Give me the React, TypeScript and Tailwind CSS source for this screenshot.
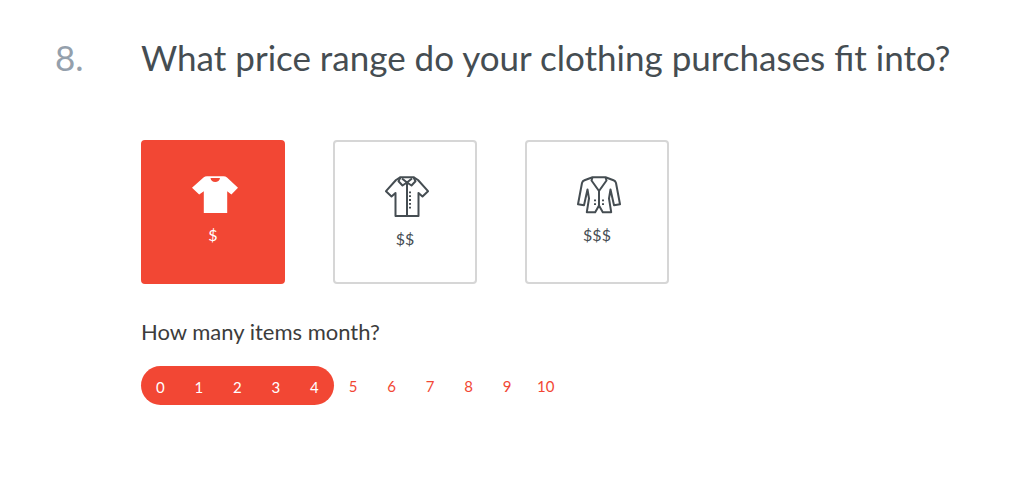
import { useState, type ReactNode } from "react";
import clsx from "clsx";

const MAX_ITEMS = 10;

function TeeIcon() {
  return (
    <svg width="46" height="38" viewBox="0 0 46 38" fill="currentColor" aria-hidden="true">
      <path d="M11.5 1.6Q13 .3 15 .3H31.5Q33.5 .3 35 1.6L46 11.8 39.4 18.6 35.2 15.2V37H11.8V15.2L7.2 18.6 0 11.8ZM18.5 2C18.8 4.8 20.8 6 23.2 6S27.7 4.8 28 2Z" />
    </svg>
  );
}

function ShirtIcon() {
  return (
    <svg
      width="44"
      height="42"
      viewBox="0 0 44 42"
      fill="none"
      stroke="currentColor"
      strokeWidth="2"
      strokeLinejoin="round"
      aria-hidden="true"
    >
      <path d="M15.5 1.2H28.5L33 4 43 15.2 37.5 20.5 33.5 17V40H10.5V17L6.5 20.5 1 15.2 11 4Z" />
      <path d="M15.5 1.2 13.5 5.2 17.5 9.5 22 6.5 26.5 9.5 30.5 5.2 28.5 1.2M17 2.5 22 6.5 27 2.5M22 6.5V40" />
      <path d="M25 15.5V33" strokeDasharray="1.8 2" />
    </svg>
  );
}

function BlazerIcon() {
  return (
    <svg
      width="44"
      height="38"
      viewBox="0 0 44 38"
      fill="none"
      stroke="currentColor"
      strokeWidth="2"
      strokeLinejoin="round"
      aria-hidden="true"
    >
      <path d="M15.5 1.2H28.5L36.5 4.2Q38.5 5 39 7L43 28.3 37 29.3 33.5 13.5 32 22.5 34.2 36.2H25.8L22 29.5 18.2 36.2H9.8L12 22.5 10.5 13.5 7 29.3 1 28.3 5 7Q5.5 5 7.5 4.2Z" />
      <path d="M15.5 1.2 14.5 4.5 22 15 29.5 4.5 28.5 1.2M22 15V29.5" />
      <path d="M18 23.5V29M26 23.5V29" strokeDasharray="1.8 2" />
    </svg>
  );
}

const PRICE_RANGES: { value: string; icon: ReactNode }[] = [
  { value: "$", icon: <TeeIcon /> },
  { value: "$$", icon: <ShirtIcon /> },
  { value: "$$$", icon: <BlazerIcon /> },
];

interface PriceCardProps {
  value: string;
  icon: ReactNode;
  checked: boolean;
  onSelect: (value: string) => void;
}

function PriceCard({ value, icon, checked, onSelect }: PriceCardProps) {
  return (
    <label
      className={clsx(
        "relative flex size-36 cursor-pointer flex-col items-center rounded-sm border-2 pt-[34px]",
        checked ? "border-[#f24734] bg-[#f24734] text-white" : "border-[#d6d6d6] text-[#454d52]",
      )}
    >
      <input
        type="radio"
        name="price-range"
        value={value}
        checked={checked}
        onChange={() => onSelect(value)}
        className="absolute inset-0 size-full cursor-pointer opacity-0"
      />
      <span className="pl-1">{icon}</span>
      <span className="mt-3 text-base leading-[18px]">{value}</span>
    </label>
  );
}

export default function App() {
  const [priceRange, setPriceRange] = useState("$");
  const [items, setItems] = useState(4);

  const counts = Array.from({ length: MAX_ITEMS + 1 }, (_, i) => i);
  const renderCount = (n: number) => (
    <button key={n} type="button" aria-pressed={n === items} onClick={() => setItems(n)}>
      {n}
    </button>
  );

  return (
    <main className="flex min-h-screen bg-white pt-8 pr-8 pl-[55px] font-['Lato',sans-serif]">
      <span className="w-[86px] shrink-0 text-[35px] leading-[50px] text-[#94a0ac]">8.</span>

      <div className="min-w-0 flex-1">
        <h1 id="price-label" className="text-[35px] leading-[50px] text-[#454d52]">
          What price range do your clothing purchases fit into?
        </h1>

        {/* Price range cards */}
        <div role="radiogroup" aria-labelledby="price-label" className="mt-[58px] flex flex-wrap gap-12">
          {PRICE_RANGES.map((range) => (
            <PriceCard
              key={range.value}
              {...range}
              checked={priceRange === range.value}
              onSelect={setPriceRange}
            />
          ))}
        </div>

        {/* Item count scale, filled up to the chosen number */}
        <h2 id="items-label" className="mt-8 text-[22px] leading-8 text-[#3c3c3c]">
          How many items month?
        </h2>
        <div
          role="group"
          aria-labelledby="items-label"
          className="mt-[18px] grid max-w-[424px] grid-cols-11 text-[15px] leading-5 text-[#f24734]"
        >
          <div
            className="grid h-[39px] grid-cols-subgrid rounded-full bg-[#f24734] pt-0.5 text-white"
            style={{ gridColumn: `span ${items + 1}` }}
          >
            {counts.slice(0, items + 1).map(renderCount)}
          </div>
          {counts.slice(items + 1).map(renderCount)}
        </div>
      </div>
    </main>
  );
}
